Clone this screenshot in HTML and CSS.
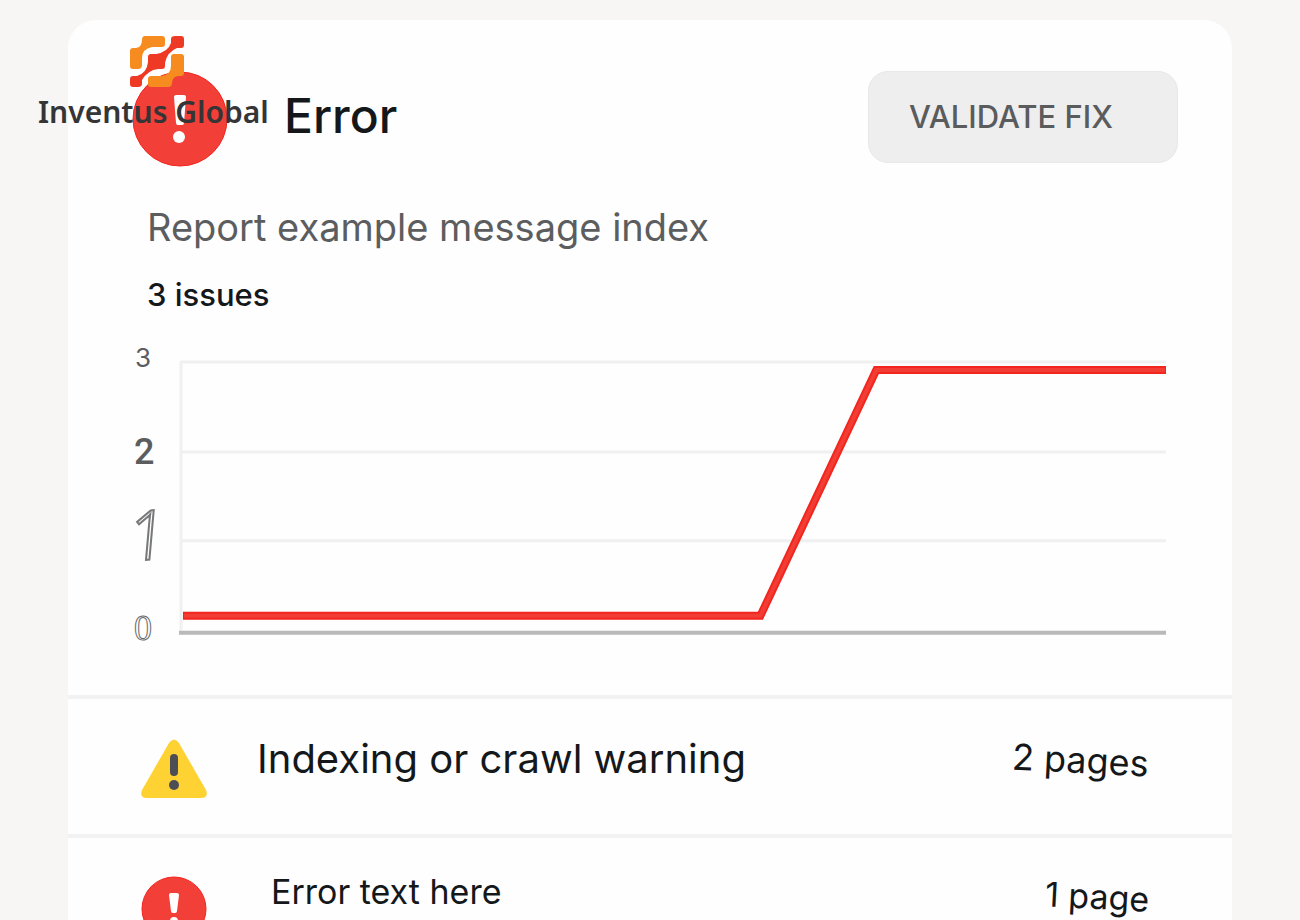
FILE: index.html
```html
<!DOCTYPE html>
<html lang="en">
<head>
<meta charset="utf-8">
<meta name="viewport" content="width=device-width, initial-scale=1">
<title>Error report</title>
<link rel="stylesheet" href="styles.css">
</head>
<body>
<div class="brand">
  <svg class="brand-mark" viewBox="0 0 54 52" aria-hidden="true">
    <path class="orange" d="M15 0H32Q35 0 35 3V8Q35 11 32 11H22Q12 13 12 22V29Q12 33 8 33H3Q0 33 0 30V15Q0 12 3 12H6Q12 11 12 4Q12 0 15 0Z"/>
    <path class="red" d="M45 0H51Q54 0 54 3V9Q54 12 51 12H47Q37 16 35 27V30Q35 33 32 33H28Q18 34 12 44V48Q12 51 8 51H3Q0 51 0 48V43Q0 40 3 40H7Q17 37 18 26V21Q18 18 21 18H26Q38 16 41 7V3Q41 0 45 0Z"/>
    <path class="orange" d="M44 18H51Q54 18 54 21V37Q54 40 51 40H48Q42 41 42 47Q42 51 38 51H21Q18 51 18 48V43Q18 40 21 40H32Q41 38 41 30V21Q41 18 44 18Z"/>
  </svg>
  <span>Inventus Global</span>
</div>
<main class="card">
  <header class="head">
    <svg class="head-icon" viewBox="0 0 96 96" aria-hidden="true">
      <circle class="disc" cx="48" cy="48" r="47"/>
      <path class="mark" d="M44 24H52Q54 24 54 26L52 52Q52 54 50 54H46Q44 54 44 52L42 26Q42 24 44 24Z"/>
      <circle class="mark" cx="47" cy="66" r="6"/>
    </svg>
    <h1>Error</h1>
    <button class="validate" type="button">VALIDATE FIX</button>
  </header>
  <section class="summary">
    <p class="message">Report example message index</p>
    <p class="count">3 issues</p>
  </section>
  <section class="chart">
    <div class="axis">
      <span>3</span>
      <span class="two">2</span>
      <span class="one">1</span>
      <span class="zero">0</span>
    </div>
    <svg class="plot" viewBox="0 0 988 276" role="img" aria-label="Issues over time, rising from 0 to 3">
      <path class="grid" d="M2 2H988M2 92H988M2 181H988M2 1V271"/>
      <path class="base" d="M0 273H988"/>
      <path class="series" d="M4 256H582L698 10H988"/>
      <path class="series-core" d="M5 256H582L698 10H987"/>
    </svg>
  </section>
  <section class="row">
    <svg class="row-icon" viewBox="0 0 66 66" aria-hidden="true">
      <path class="warn" d="M28 6Q33 -1 38 6L65 53Q68 61 60 61H6Q-2 61 1 53Z"/>
      <rect class="warn-mark" x="29" y="17" width="8" height="22" rx="4"/>
      <circle class="warn-mark" cx="33" cy="48" r="5"/>
    </svg>
    <h2 class="row-title">Indexing or crawl warning</h2>
    <span class="pages">2 pages</span>
  </section>
  <section class="row row-error">
    <svg class="row-icon" viewBox="0 0 66 66" aria-hidden="true">
      <circle class="disc" cx="33" cy="33" r="32"/>
      <path class="mark" d="M30 17H36Q38 17 38 19L36 35Q36 37 34 37H32Q30 37 30 35L28 19Q28 17 30 17Z"/>
      <circle class="mark" cx="33" cy="45" r="4"/>
    </svg>
    <h2 class="row-title">Error text here</h2>
    <span class="pages">1 page</span>
  </section>
</main>
</body>
</html>
```
FILE: styles.css
```css
* { box-sizing: border-box; }
html { height: 100%; }
body {
  margin: 0;
  height: 100%;
  overflow: hidden;
  padding: 20px 68px 0;
  background: #f7f6f5;
  color: #14181a;
  font-family: Inter, "Liberation Sans", sans-serif;
}
h1, h2, p { margin: 0; }
.brand {
  position: absolute;
  top: 36px;
  left: 38px;
  display: flex;
  flex-direction: column;
  gap: 4px;
  color: #353436;
  font: 600 30px/40px "Noto Sans", "Open Sans", sans-serif;
  white-space: nowrap;
}
.brand-mark { width: 54px; height: 52px; margin-left: 92px; }
.orange { fill: #f68b1f; }
.red { fill: #ee3924; }
.card {
  min-height: 100%;
  padding-top: 51px;
  border-radius: 28px 28px 0 0;
  background: #fefefe;
}
.head {
  display: flex;
  align-items: flex-start;
  height: 96px;
  padding: 0 54px 0 64px;
}
.head-icon { width: 96px; height: 96px; }
.disc { fill: #f23f37; stroke: #f5251f; stroke-width: 1; }
.mark { fill: #fff; }
h1 {
  margin-left: 56px;
  font-size: 48px;
  font-weight: 500;
  line-height: 90px;
}
.validate {
  width: 310px;
  height: 92px;
  margin-left: auto;
  padding: 0 40px;
  border: 1px solid #e8e8e8;
  border-radius: 20px;
  background: #eeeeee;
  color: #5a5b5c;
  font: 500 31px/40px Inter, sans-serif;
  text-align: left;
  white-space: nowrap;
}
.summary { padding: 36px 80px 0 79px; }
.message { color: #5c5d5e; font-size: 38px; line-height: 48px; }
.count { margin-top: 24px; font-size: 31px; font-weight: 500; line-height: 40px; }
.chart {
  display: flex;
  margin-top: 45px;
  padding: 0 66px 59px 64px;
}
.axis {
  display: flex;
  flex-direction: column;
  justify-content: space-between;
  width: 47px;
  margin: -18px 0 -8px;
  padding-left: 2px;
  color: #5c5d5e;
  font-size: 26px;
  line-height: 32px;
}
.axis span { width: 18px; text-align: center; }
.axis .two { margin-top: 16px; font: 500 36px/40px Roboto, sans-serif; }
.axis .one {
  margin-bottom: 16px;
  color: transparent;
  font: italic 300 68px/40px "Open Sans", sans-serif;
  text-indent: -6px;
  -webkit-text-stroke: 2px #77787a;
  transform: rotate(-7deg);
}
.axis .zero {
  color: transparent;
  font: 36px/32px "Liberation Serif", serif;
  -webkit-text-stroke: 1px #66686a;
}
.plot { flex: 1; min-width: 0; display: block; }
.plot path { fill: none; }
.plot .grid { stroke: #f0f0f0; stroke-width: 3; }
.plot .base { stroke: #b9b9b9; stroke-width: 4; }
.plot .series { stroke: #f2261f; stroke-width: 8; }
.plot .series-core { stroke: #f23d35; stroke-width: 4; }
.row {
  display: flex;
  align-items: flex-start;
  padding: 38px 83px 31px 73px;
  border-top: 4px solid #f2f2f2;
}
.row:last-child { padding-bottom: 0; }
.row-icon { width: 66px; height: 66px; }
.warn { fill: #fed233; }
.warn-mark { fill: #4c4d55; }
.row-title { margin-left: 50px; font-size: 40px; font-weight: 400; line-height: 44px; }
.pages {
  margin-left: auto;
  font-size: 36px;
  line-height: 46px;
  transform: rotate(3deg);
}
.row-error .row-title { margin-left: 64px; font-size: 34px; line-height: 32px; }
.row-error .pages { font-size: 34px; line-height: 42px; }
```
